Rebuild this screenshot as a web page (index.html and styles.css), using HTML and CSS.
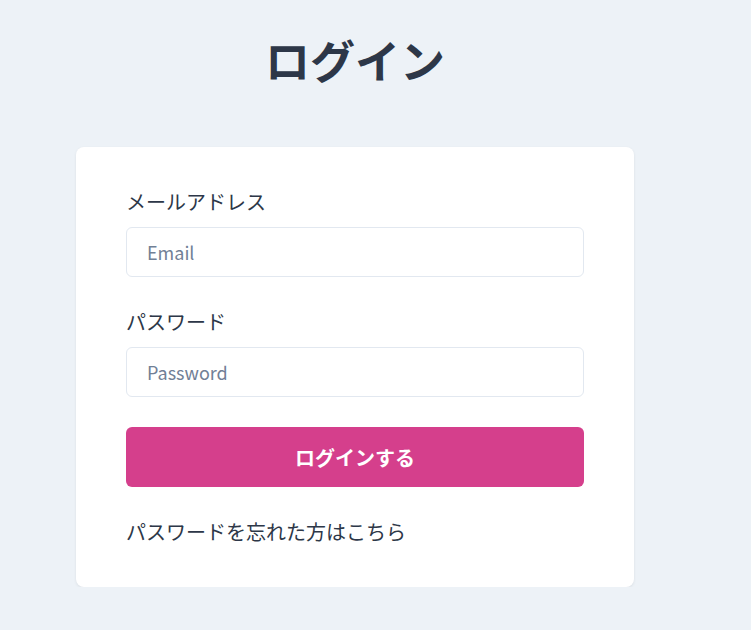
FILE: index.html
```html
<!DOCTYPE html>
<html lang="ja">
<head>
  <meta charset="UTF-8">
  <title>ログイン</title>
  <link rel="stylesheet" href="styles.css">
</head>
<body>

  <div class="wrapper">
    <h1 class="title">ログイン</h1>

    <form class="login-card" onsubmit="return false;">
      <div class="field">
        <label for="email">メールアドレス</label>
        <input type="email" id="email" placeholder="Email">
      </div>
      <div class="field">
        <label for="password">パスワード</label>
        <input type="password" id="password" placeholder="Password">
      </div>
      <button type="submit" class="login-btn">ログインする</button>
      <a href="#" class="forgot-link">パスワードを忘れた方はこちら</a>
    </form>
  </div>

</body>
</html>
```

FILE: styles.css
```css
* {
  box-sizing: border-box;
  margin: 0;
  padding: 0;
  font-family: "Noto Sans CJK JP", "Noto Sans", sans-serif;
}

body {
  background-color: #edf2f7;
  color: #2d3748;
}

.wrapper {
  width: 558px;
  margin-left: 76px;
  padding-top: 24px;
}

.title {
  font-size: 45px;
  font-weight: bold;
  line-height: 72px;
  text-align: center;
  margin-bottom: 51px;
}

.login-card {
  background-color: #fff;
  border-radius: 8px;
  padding: 40px 50px;
  box-shadow: 0 1px 3px rgba(0, 0, 0, 0.08);
  display: flex;
  flex-direction: column;
}

.field {
  display: flex;
  flex-direction: column;
  margin-bottom: 30px;
}

.field label {
  font-size: 20px;
  line-height: 30px;
  margin-bottom: 10px;
}

.field input {
  height: 50px;
  border: 1px solid #e2e8f0;
  border-radius: 6px;
  padding: 0 20px;
  font-size: 18px;
  color: #2d3748;
  outline: none;
}

.field input::placeholder {
  color: #718096;
}

.login-btn {
  height: 60px;
  border: none;
  border-radius: 6px;
  background-color: #d53f8c;
  color: #fff;
  font-size: 20px;
  font-weight: bold;
  cursor: pointer;
  margin-bottom: 30px;
}

.forgot-link {
  font-size: 20px;
  line-height: 30px;
  color: #2d3748;
  text-decoration: none;
}
```
